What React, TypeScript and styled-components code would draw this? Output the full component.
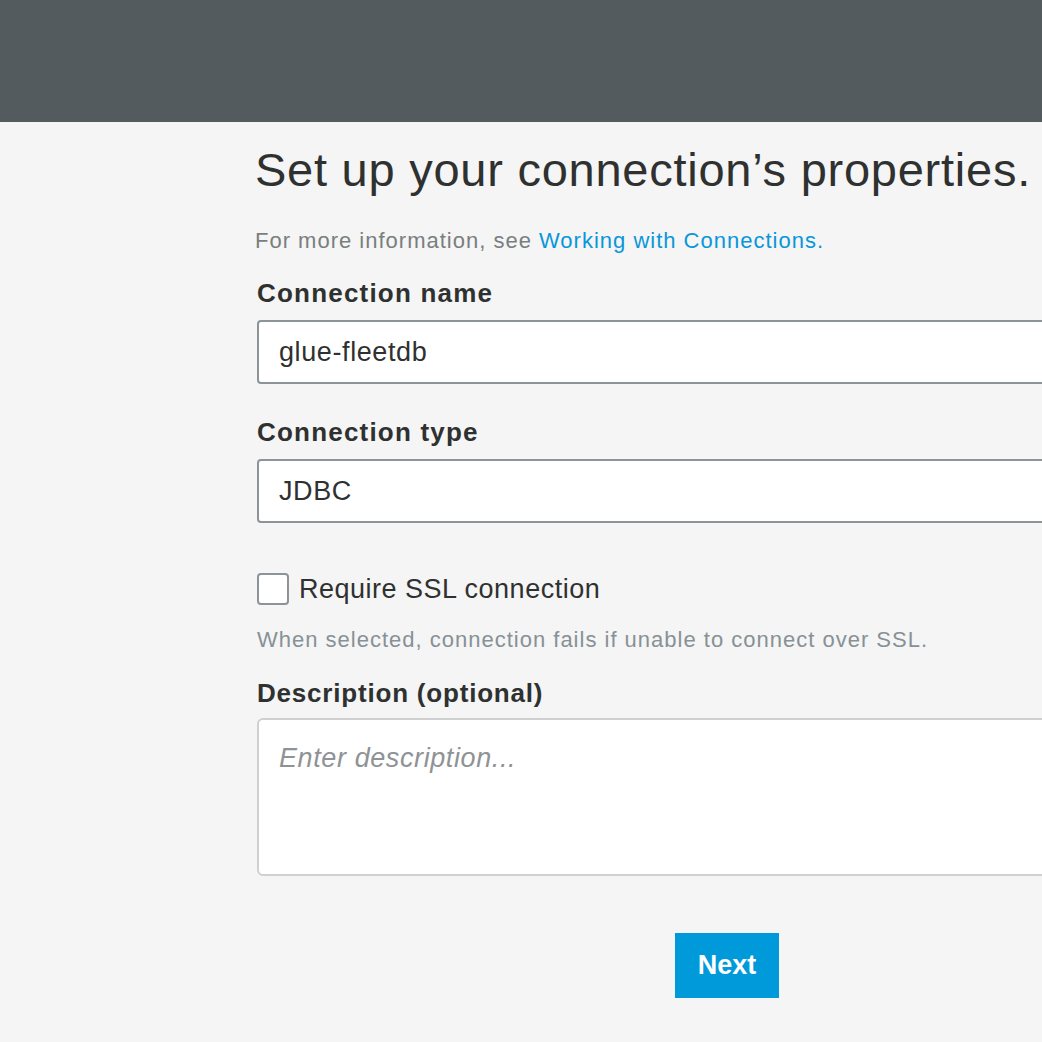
import React from 'react';
import styled, { createGlobalStyle } from 'styled-components';

const GlobalStyle = createGlobalStyle`
  html, body {
    margin: 0;
    padding: 0;
    background: #f4f5f4;
    overflow: hidden;
  }
  body {
    font-family: 'Liberation Sans', Arial, sans-serif;
    color: #333;
  }
`;

const Page = styled.div`
  width: 1042px;
  height: 1042px;
  display: flex;
  flex-direction: column;
`;

const TopBar = styled.header`
  height: 122px;
  flex-shrink: 0;
  background: #545b5f;
`;

const Content = styled.main`
  padding-left: 257px;
  width: 940px;
`;

const Title = styled.h1`
  margin: 0 0 0 -2px;
  padding-top: 22px;
  font-size: 47px;
  font-weight: 400;
  line-height: 52px;
  color: #2f3131;
  white-space: nowrap;
  letter-spacing: 0.75px;
`;

const Intro = styled.p`
  margin: 32px 0 0 -2px;
  font-size: 22px;
  line-height: 26px;
  letter-spacing: 1px;
  color: #7a7e80;
  white-space: nowrap;
`;

const Link = styled.a`
  color: #0a97d9;
  text-decoration: none;
`;

const Field = styled.div`
  display: flex;
  flex-direction: column;
`;

const Label = styled.label<{ $top: number; $spacing?: number }>`
  margin-top: ${(p) => p.$top}px;
  font-size: 26px;
  font-weight: 700;
  line-height: 30px;
  letter-spacing: ${(p) => p.$spacing ?? 0.8}px;
  color: #2f3131;
  white-space: nowrap;
`;

const TextInput = styled.div`
  margin-top: 12px;
  height: 64px;
  box-sizing: border-box;
  border: 2px solid #8c9497;
  border-radius: 4px;
  background: #fff;
  display: flex;
  align-items: center;
  padding-left: 20px;
  font-size: 27px;
  letter-spacing: 0.6px;
  color: #2f3131;
`;

const CheckRow = styled.div`
  margin-top: 50px;
  display: flex;
  align-items: center;
  gap: 10px;
`;

const Box = styled.span`
  width: 32px;
  height: 32px;
  box-sizing: border-box;
  border: 2px solid #8c9497;
  border-radius: 4px;
  background: #fff;
`;

const CheckLabel = styled.span`
  font-size: 27px;
  line-height: 32px;
  letter-spacing: 0.5px;
  color: #2f3131;
`;

const Hint = styled.p`
  margin: 22px 0 0;
  font-size: 22px;
  line-height: 26px;
  letter-spacing: 1px;
  color: #879196;
  white-space: nowrap;
`;

const TextArea = styled.div`
  margin-top: 10px;
  height: 158px;
  box-sizing: border-box;
  border: 2px solid #cfd1d1;
  border-radius: 6px;
  background: #fff;
  padding: 22px 20px;
  font-size: 27px;
  line-height: 32px;
  letter-spacing: 0.6px;
  font-style: italic;
  color: #8f9396;
`;

const Actions = styled.div`
  margin-top: 57px;
  display: flex;
  justify-content: center;
`;

const PrimaryButton = styled.button`
  width: 104px;
  height: 65px;
  border: none;
  background: #0099da;
  color: #fff;
  font-family: 'Liberation Sans', Arial, sans-serif;
  font-size: 27px;
  font-weight: 700;
`;

export default function App() {
  return (
    <>
      <GlobalStyle />
      <Page>
        <TopBar />
        <Content>
          <Title>Set up your connection’s properties.</Title>
          <Intro>
            For more information, see <Link href="#">Working with Connections.</Link>
          </Intro>
          <Field>
            <Label $top={24} $spacing={1.2}>Connection name</Label>
            <TextInput>glue-fleetdb</TextInput>
          </Field>
          <Field>
            <Label $top={33} $spacing={1.2}>Connection type</Label>
            <TextInput>JDBC</TextInput>
          </Field>
          <CheckRow>
            <Box />
            <CheckLabel>Require SSL connection</CheckLabel>
          </CheckRow>
          <Hint>When selected, connection fails if unable to connect over SSL.</Hint>
          <Field>
            <Label $top={25}>Description (optional)</Label>
            <TextArea>Enter description...</TextArea>
          </Field>
          <Actions>
            <PrimaryButton>Next</PrimaryButton>
          </Actions>
        </Content>
      </Page>
    </>
  );
}
